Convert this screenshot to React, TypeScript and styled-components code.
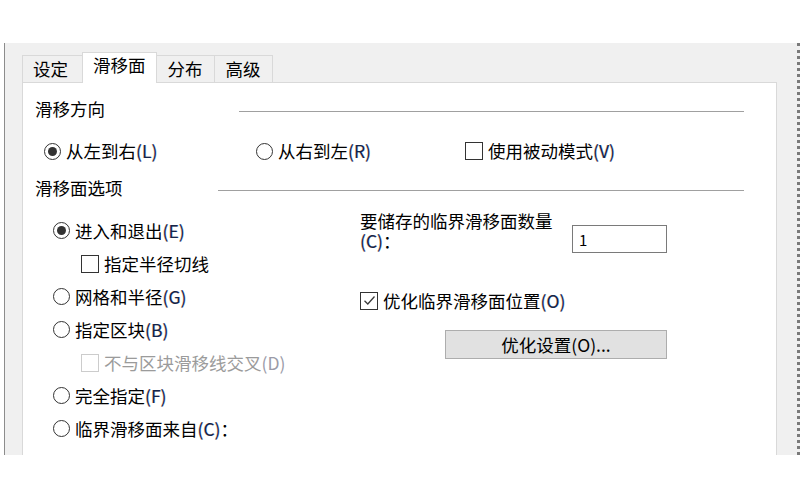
import React from 'react';
import styled, { createGlobalStyle } from 'styled-components';

const GlobalStyle = createGlobalStyle`
  html, body {
    margin: 0;
    padding: 0;
    background: #ffffff;
  }
  body {
    font-family: 'Noto Sans CJK SC', 'Noto Sans', sans-serif;
    font-size: 17.5px;
    color: #000000;
  }
`;

const TABS = ['设定', '滑移面', '分布', '高级'];

const App: React.FC = () => {
  return (
    <>
      <GlobalStyle />
      <Page>
        <Window>
          <TabStrip>
            {TABS.map((title, index) => (
              <Tab key={title} $active={index === 1}>
                {title}
              </Tab>
            ))}
          </TabStrip>
          <Panel>
            <SectionHeader>
              <HeaderText>滑移方向</HeaderText>
              <Rule $offset={134} />
            </SectionHeader>

            <DirectionRow>
              <Option>
                <Radio $checked />
                <Label>
                  从左到右<Key>(L)</Key>
                </Label>
              </Option>
              <Option>
                <Radio />
                <Label>
                  从右到左<Key>(R)</Key>
                </Label>
              </Option>
              <Option>
                <CheckBox />
                <Label>
                  使用被动模式<Key>(V)</Key>
                </Label>
              </Option>
            </DirectionRow>

            <SectionHeader $top={13}>
              <HeaderText>滑移面选项</HeaderText>
              <Rule $offset={95} />
            </SectionHeader>

            <OptionsBody>
              <LeftColumn>
                <Option $row>
                  <Radio $checked />
                  <Label>
                    进入和退出<Key>(E)</Key>
                  </Label>
                </Option>
                <Option $row $indent>
                  <CheckBox />
                  <Label>指定半径切线</Label>
                </Option>
                <Option $row>
                  <Radio />
                  <Label>
                    网格和半径<Key>(G)</Key>
                  </Label>
                </Option>
                <Option $row>
                  <Radio />
                  <Label>
                    指定区块<Key>(B)</Key>
                  </Label>
                </Option>
                <Option $row $indent>
                  <CheckBox $disabled />
                  <Label $disabled>
                    不与区块滑移线交叉<Key $disabled>(D)</Key>
                  </Label>
                </Option>
                <Option $row>
                  <Radio />
                  <Label>
                    完全指定<Key>(F)</Key>
                  </Label>
                </Option>
                <Option $row>
                  <Radio />
                  <Label>
                    临界滑移面来自<Key>(C)</Key>：
                  </Label>
                </Option>
              </LeftColumn>

              <RightColumn>
                <CountRow>
                  <CountLabel>
                    要储存的临界滑移面数量
                    <br />
                    <Key>(C)</Key>：
                  </CountLabel>
                  <NumberInput defaultValue="1" />
                </CountRow>
                <Option $row>
                  <CheckBox $checked />
                  <Label>
                    优化临界滑移面位置<Key>(O)</Key>
                  </Label>
                </Option>
                <ButtonRow>
                  <Button>优化设置(O)...</Button>
                </ButtonRow>
              </RightColumn>
            </OptionsBody>
          </Panel>
        </Window>
      </Page>
    </>
  );
};

export default App;

const Radio: React.FC<{ $checked?: boolean }> = ({ $checked }) => (
  <RadioCircle>{$checked && <RadioDot />}</RadioCircle>
);

const CheckBox: React.FC<{ $checked?: boolean; $disabled?: boolean }> = ({
  $checked,
  $disabled,
}) => (
  <CheckSquare $disabled={$disabled}>
    {$checked && (
      <svg width="13" height="13" viewBox="0 0 13 13">
        <path
          d="M1.5 6.8 L4.8 10 L11.5 2.5"
          fill="none"
          stroke="#3a3a3a"
          strokeWidth="1.3"
        />
      </svg>
    )}
  </CheckSquare>
);

const Page = styled.div`
  width: 800px;
  height: 500px;
  padding-top: 43px;
  padding-left: 4px;
  box-sizing: border-box;
`;

const Window = styled.div`
  width: 796px;
  height: 412px;
  box-sizing: border-box;
  background: #f0f0f0;
  border-left: 1px solid #8c8c8c;
  border-right: 3px dotted #7a7a7a;
  padding: 9px 0 0 17px;
  overflow: hidden;
`;

const TabStrip = styled.div`
  display: flex;
  align-items: flex-end;
  height: 30px;
  position: relative;
  z-index: 1;
`;

const Tab = styled.div<{ $active?: boolean }>`
  box-sizing: border-box;
  height: ${(p) => (p.$active ? 31 : 27)}px;
  margin-bottom: ${(p) => (p.$active ? -1 : 0)}px;
  margin-left: -1px;
  padding: ${(p) => (p.$active ? '0 10px 4px' : '1px 11px 0')};
  border: 1px solid #d9d9d9;
  border-bottom: none;
  background: ${(p) => (p.$active ? '#ffffff' : '#f0f0f0')};
  line-height: 24px;
  white-space: nowrap;

  &:first-child {
    margin-left: 0;
    padding-left: 10px;
    width: 61px;
  }
`;

const Panel = styled.div`
  width: 755px;
  height: 420px;
  box-sizing: border-box;
  background: #ffffff;
  border: 1px solid #d9d9d9;
  padding: 14px 32px 0 12px;
`;

const SectionHeader = styled.div<{ $top?: number }>`
  display: flex;
  align-items: center;
  height: 24px;
  margin-top: ${(p) => p.$top ?? 0}px;
`;

const HeaderText = styled.span`
  line-height: 24px;
  white-space: nowrap;
`;

const Rule = styled.div<{ $offset: number }>`
  flex: 1;
  height: 1px;
  margin-left: ${(p) => p.$offset}px;
  margin-top: 4px;
  background: #a0a0a0;
`;

const DirectionRow = styled.div`
  display: grid;
  grid-template-columns: 212px 209px auto;
  margin: 18px 0 0 9px;
  height: 24px;
`;

const Option = styled.div<{ $row?: boolean; $indent?: boolean }>`
  display: flex;
  align-items: center;
  gap: 5px;
  height: ${(p) => (p.$row ? 33 : 24)}px;
  padding-left: ${(p) => (p.$indent ? 28 : 0)}px;
`;

const Label = styled.span<{ $disabled?: boolean }>`
  line-height: 24px;
  white-space: nowrap;
  color: ${(p) => (p.$disabled ? '#9b9b9b' : '#000000')};
`;

const Key = styled.span<{ $disabled?: boolean }>`
  color: ${(p) => (p.$disabled ? '#9b9ba8' : '#14254a')};
  text-shadow: ${(p) =>
    p.$disabled
      ? 'none'
      : '-0.5px 0 rgba(220, 140, 40, 0.45), 0.5px 0 rgba(40, 120, 230, 0.45)'};
`;

const RadioCircle = styled.span`
  width: 17px;
  height: 17px;
  box-sizing: border-box;
  flex-shrink: 0;
  border: 1px solid #333333;
  border-radius: 50%;
  display: flex;
  align-items: center;
  justify-content: center;
`;

const RadioDot = styled.span`
  width: 9px;
  height: 9px;
  border-radius: 50%;
  background: #333333;
`;

const CheckSquare = styled.span<{ $disabled?: boolean }>`
  width: 18px;
  height: 18px;
  box-sizing: border-box;
  flex-shrink: 0;
  border: 1px solid ${(p) => (p.$disabled ? '#cccccc' : '#333333')};
  background: #ffffff;
  display: flex;
  align-items: center;
  justify-content: center;
`;

const OptionsBody = styled.div`
  display: flex;
  margin: 14px 0 0 18px;
`;

const LeftColumn = styled.div`
  width: 307px;
  display: flex;
  flex-direction: column;
`;

const RightColumn = styled.div`
  width: 307px;
  display: flex;
  flex-direction: column;
`;

const CountRow = styled.div`
  display: flex;
  align-items: flex-start;
  justify-content: space-between;
  height: 73px;
  margin-top: -3px;
`;

const CountLabel = styled.div`
  line-height: 20px;
  white-space: nowrap;
`;

const NumberInput = styled.input`
  width: 95px;
  height: 28px;
  margin-top: 14px;
  box-sizing: border-box;
  border: 1px solid #7a7a7a;
  padding: 0 6px;
  font-family: 'Noto Sans CJK SC', 'Noto Sans', sans-serif;
  font-size: 15px;
  color: #000000;
  outline: none;
`;

const ButtonRow = styled.div`
  display: flex;
  justify-content: flex-end;
  margin-top: 13px;
`;

const Button = styled.button`
  width: 222px;
  height: 29px;
  box-sizing: border-box;
  border: 1px solid #adadad;
  background: #e1e1e1;
  font-family: 'Noto Sans CJK SC', 'Noto Sans', sans-serif;
  font-size: 17.5px;
  color: #000000;
  line-height: 24px;
  padding: 0;
`;
